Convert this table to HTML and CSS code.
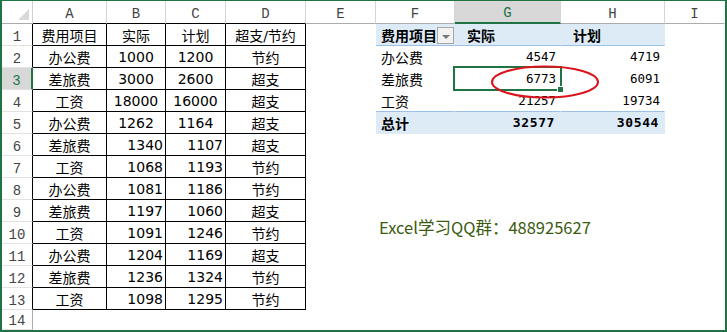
FILE: index.html
```html
<!DOCTYPE html>
<html lang="zh-CN">
<head>
<meta charset="utf-8">
<title>Excel</title>
<link rel="stylesheet" href="styles.css">
</head>
<body>
<div class="frame">
  <div class="sheet">
    <!-- header row -->
    <div class="c corner"><div class="tri"></div></div>
    <div class="c h hb">A</div>
    <div class="c h hb">B</div>
    <div class="c h hb">C</div>
    <div class="c h hb">D</div>
    <div class="c h">E</div>
    <div class="c h">F</div>
    <div class="c h hsel">G</div>
    <div class="c h">H</div>
    <div class="c h hlast">I</div>

    <!-- row 1 -->
    <div class="c r rb">1</div>
    <div class="c t">费用项目</div>
    <div class="c t">实际</div>
    <div class="c t">计划</div>
    <div class="c t">超支/节约</div>
    <div class="c"></div>
    <div class="c pv ph pf"><span class="pft">费用项目</span><span class="dd"><span class="ddtri"></span></span></div>
    <div class="c pv ph pl">实际</div>
    <div class="c pv ph pl">计划</div>
    <div class="c"></div>

    <!-- row 2 -->
    <div class="c r rb">2</div>
    <div class="c t">办公费</div>
    <div class="c t n">1000</div>
    <div class="c t n">1200</div>
    <div class="c t">节约</div>
    <div class="c"></div>
    <div class="c pv pn">办公费</div>
    <div class="c pv pd">4547</div>
    <div class="c pv pd">4719</div>
    <div class="c"></div>

    <!-- row 3 -->
    <div class="c r rb rsel">3</div>
    <div class="c t">差旅费</div>
    <div class="c t n">3000</div>
    <div class="c t n">2600</div>
    <div class="c t">超支</div>
    <div class="c"></div>
    <div class="c pv pn">差旅费</div>
    <div class="c pv pd sel">6773<span class="handle"></span></div>
    <div class="c pv pd">6091</div>
    <div class="c"></div>

    <!-- row 4 -->
    <div class="c r rb">4</div>
    <div class="c t">工资</div>
    <div class="c t n">18000</div>
    <div class="c t n">16000</div>
    <div class="c t">超支</div>
    <div class="c"></div>
    <div class="c pv pn pbt">工资</div>
    <div class="c pv pd pbt">21257</div>
    <div class="c pv pd pbt">19734</div>
    <div class="c"></div>

    <!-- row 5 -->
    <div class="c r rb">5</div>
    <div class="c t">办公费</div>
    <div class="c t n">1262</div>
    <div class="c t n">1164</div>
    <div class="c t">超支</div>
    <div class="c"></div>
    <div class="c pv ptot pn">总计</div>
    <div class="c pv ptot pd">32577</div>
    <div class="c pv ptot pd">30544</div>
    <div class="c"></div>

    <!-- row 6 -->
    <div class="c r rb">6</div>
    <div class="c t">差旅费</div>
    <div class="c t n rt">1340</div>
    <div class="c t n rt">1107</div>
    <div class="c t">超支</div>
    <div class="c"></div><div class="c"></div><div class="c"></div><div class="c"></div><div class="c"></div>

    <!-- row 7 -->
    <div class="c r rb">7</div>
    <div class="c t">工资</div>
    <div class="c t n rt">1068</div>
    <div class="c t n rt">1193</div>
    <div class="c t">节约</div>
    <div class="c"></div><div class="c"></div><div class="c"></div><div class="c"></div><div class="c"></div>

    <!-- row 8 -->
    <div class="c r rb">8</div>
    <div class="c t">办公费</div>
    <div class="c t n rt">1081</div>
    <div class="c t n rt">1186</div>
    <div class="c t">节约</div>
    <div class="c"></div><div class="c"></div><div class="c"></div><div class="c"></div><div class="c"></div>

    <!-- row 9 -->
    <div class="c r rb">9</div>
    <div class="c t">差旅费</div>
    <div class="c t n rt">1197</div>
    <div class="c t n rt">1060</div>
    <div class="c t">超支</div>
    <div class="c"></div><div class="c"></div><div class="c"></div><div class="c"></div><div class="c"></div>

    <!-- row 10 -->
    <div class="c r rb">10</div>
    <div class="c t">工资</div>
    <div class="c t n rt">1091</div>
    <div class="c t n rt">1246</div>
    <div class="c t">节约</div>
    <div class="c"></div>
    <div class="c note"><span>Excel学习QQ群：488925627</span></div>
    <div class="c"></div><div class="c"></div><div class="c"></div>

    <!-- row 11 -->
    <div class="c r rb">11</div>
    <div class="c t">办公费</div>
    <div class="c t n rt">1204</div>
    <div class="c t n rt">1169</div>
    <div class="c t">超支</div>
    <div class="c"></div><div class="c"></div><div class="c"></div><div class="c"></div><div class="c"></div>

    <!-- row 12 -->
    <div class="c r rb">12</div>
    <div class="c t">差旅费</div>
    <div class="c t n rt">1236</div>
    <div class="c t n rt">1324</div>
    <div class="c t">节约</div>
    <div class="c"></div><div class="c"></div><div class="c"></div><div class="c"></div><div class="c"></div>

    <!-- row 13 -->
    <div class="c r rb">13</div>
    <div class="c t">工资</div>
    <div class="c t n rt">1098</div>
    <div class="c t n rt">1295</div>
    <div class="c t">节约</div>
    <div class="c"></div><div class="c"></div><div class="c"></div><div class="c"></div><div class="c"></div>

    <!-- row 14 -->
    <div class="c r">14</div>
    <div class="c"></div><div class="c"></div><div class="c"></div><div class="c"></div>
    <div class="c"></div><div class="c"></div><div class="c"></div><div class="c"></div><div class="c"></div>
  </div>
  <svg class="ellipse" width="110" height="36" viewBox="0 0 110 36">
    <ellipse cx="55" cy="17" rx="53" ry="15.5" fill="none" stroke="#d9141b" stroke-width="2"/>
  </svg>
</div>
</body>
</html>
```

FILE: styles.css
```css
html, body {
  margin: 0;
  padding: 0;
  background: #ffffff;
}

.frame {
  position: relative;
  width: 727px;
  height: 332px;
  box-sizing: border-box;
  border: 2px solid #217346;
  border-top-width: 1px;
  overflow: hidden;
  background: #ffffff;
}

.sheet {
  display: grid;
  grid-template-columns: 31px 74px 59px 60px 80px 70px 79px 106px 104px 1fr;
  grid-template-rows: 23px repeat(13, 22px) 20px;
  font-family: "DejaVu Sans", "Noto Sans CJK SC", sans-serif;
  font-size: 14px;
  color: #000;
}

.c {
  box-sizing: border-box;
  border-right: 1px solid transparent;
  border-bottom: 1px solid transparent;
  display: flex;
  align-items: center;
  white-space: nowrap;
  min-width: 0;
}

/* top-left corner */
.corner {
  justify-content: flex-end;
  align-items: flex-end;
  padding: 0 3px 3px 0;
  border-right: 1px solid #d0d0d0;
  border-bottom: 1px solid #ababab;
}
.tri {
  width: 11px;
  height: 11px;
  background: #d9d9d9;
  clip-path: polygon(100% 0, 100% 100%, 0 100%);
}

/* column headers */
.h {
  justify-content: center;
  align-items: flex-end;
  padding-bottom: 1px;
  font-family: "Liberation Mono", monospace;
  font-size: 14px;
  color: #444;
  border-right: 1px solid #d4d4d4;
  border-bottom: 1px solid #ababab;
}
.hb {
  border-bottom-color: #000;
}
.hlast {
  border-right-color: transparent;
}
.hsel {
  background: #d8d8d8;
  color: #217346;
  border-bottom: 2px solid #217346;
}

/* row headers */
.r {
  justify-content: center;
  align-items: flex-end;
  font-family: "Liberation Mono", monospace;
  font-size: 14px;
  color: #444;
  border-right: 1px solid #ababab;
  border-bottom: 1px solid #e2e2e2;
}
.rb {
  border-right-color: #000;
}
.rsel {
  background: #d8d8d8;
  color: #217346;
  border-right: 2px solid #217346;
}

/* left table */
.t {
  justify-content: center;
  border-right: 1px solid #000;
  border-bottom: 1px solid #000;
}
.n {
  font-family: "DejaVu Sans", sans-serif;
}
.rt {
  justify-content: flex-end;
  padding-right: 2px;
}

/* pivot table */
.pv {
  font-family: "DejaVu Sans Mono", "Noto Sans CJK SC", monospace;
  font-size: 12.5px;
}
.pn {
  font-family: "Noto Sans CJK SC", sans-serif;
  font-size: 14px;
  padding-left: 5px;
}
.pd {
  justify-content: flex-end;
  padding-right: 4px;
}
.ph {
  background: #ddebf7;
  border-bottom: 1px solid #9bc2e6;
  font-family: "Noto Sans CJK SC", sans-serif;
  font-weight: bold;
  font-size: 14px;
}
.pl {
  padding-left: 12px;
}
.pf {
  position: relative;
  overflow: hidden;
  padding-left: 5px;
}
.pft {
  display: block;
}
.dd {
  position: absolute;
  right: 0;
  top: 3px;
  width: 17px;
  height: 17px;
  box-sizing: border-box;
  border: 1px solid #a6a6a6;
  background: #f2f2f2;
  display: flex;
  justify-content: center;
  align-items: center;
}
.ddtri {
  width: 0;
  height: 0;
  margin-top: 3px;
  border-left: 4px solid transparent;
  border-right: 4px solid transparent;
  border-top: 4px solid #777;
}
.pbt {
  border-bottom: 1px solid #9bc2e6;
}
.ptot {
  background: #ddebf7;
  font-weight: bold;
}
.ptot.pd {
  font-size: 13px;
  letter-spacing: 0.6px;
  padding-right: 5px;
}

/* selected cell */
.sel {
  position: relative;
}
.sel::after {
  content: "";
  position: absolute;
  left: -2px;
  top: -2px;
  right: -2px;
  bottom: -2px;
  border: 2px solid #217346;
  pointer-events: none;
}
.handle {
  position: absolute;
  right: -4px;
  bottom: -4px;
  width: 5px;
  height: 5px;
  background: #217346;
  border: 1px solid #fff;
  z-index: 2;
}

/* note text */
.note {
  overflow: visible;
  align-items: flex-start;
  padding-left: 3px;
}
.note span {
  font-family: "Noto Sans CJK SC", sans-serif;
  font-size: 16.5px;
  line-height: 16px;
  color: #3b5a10;
  margin-top: -3px;
}

/* circle annotation */
.ellipse {
  position: absolute;
  left: 488px;
  top: 64px;
}
```
